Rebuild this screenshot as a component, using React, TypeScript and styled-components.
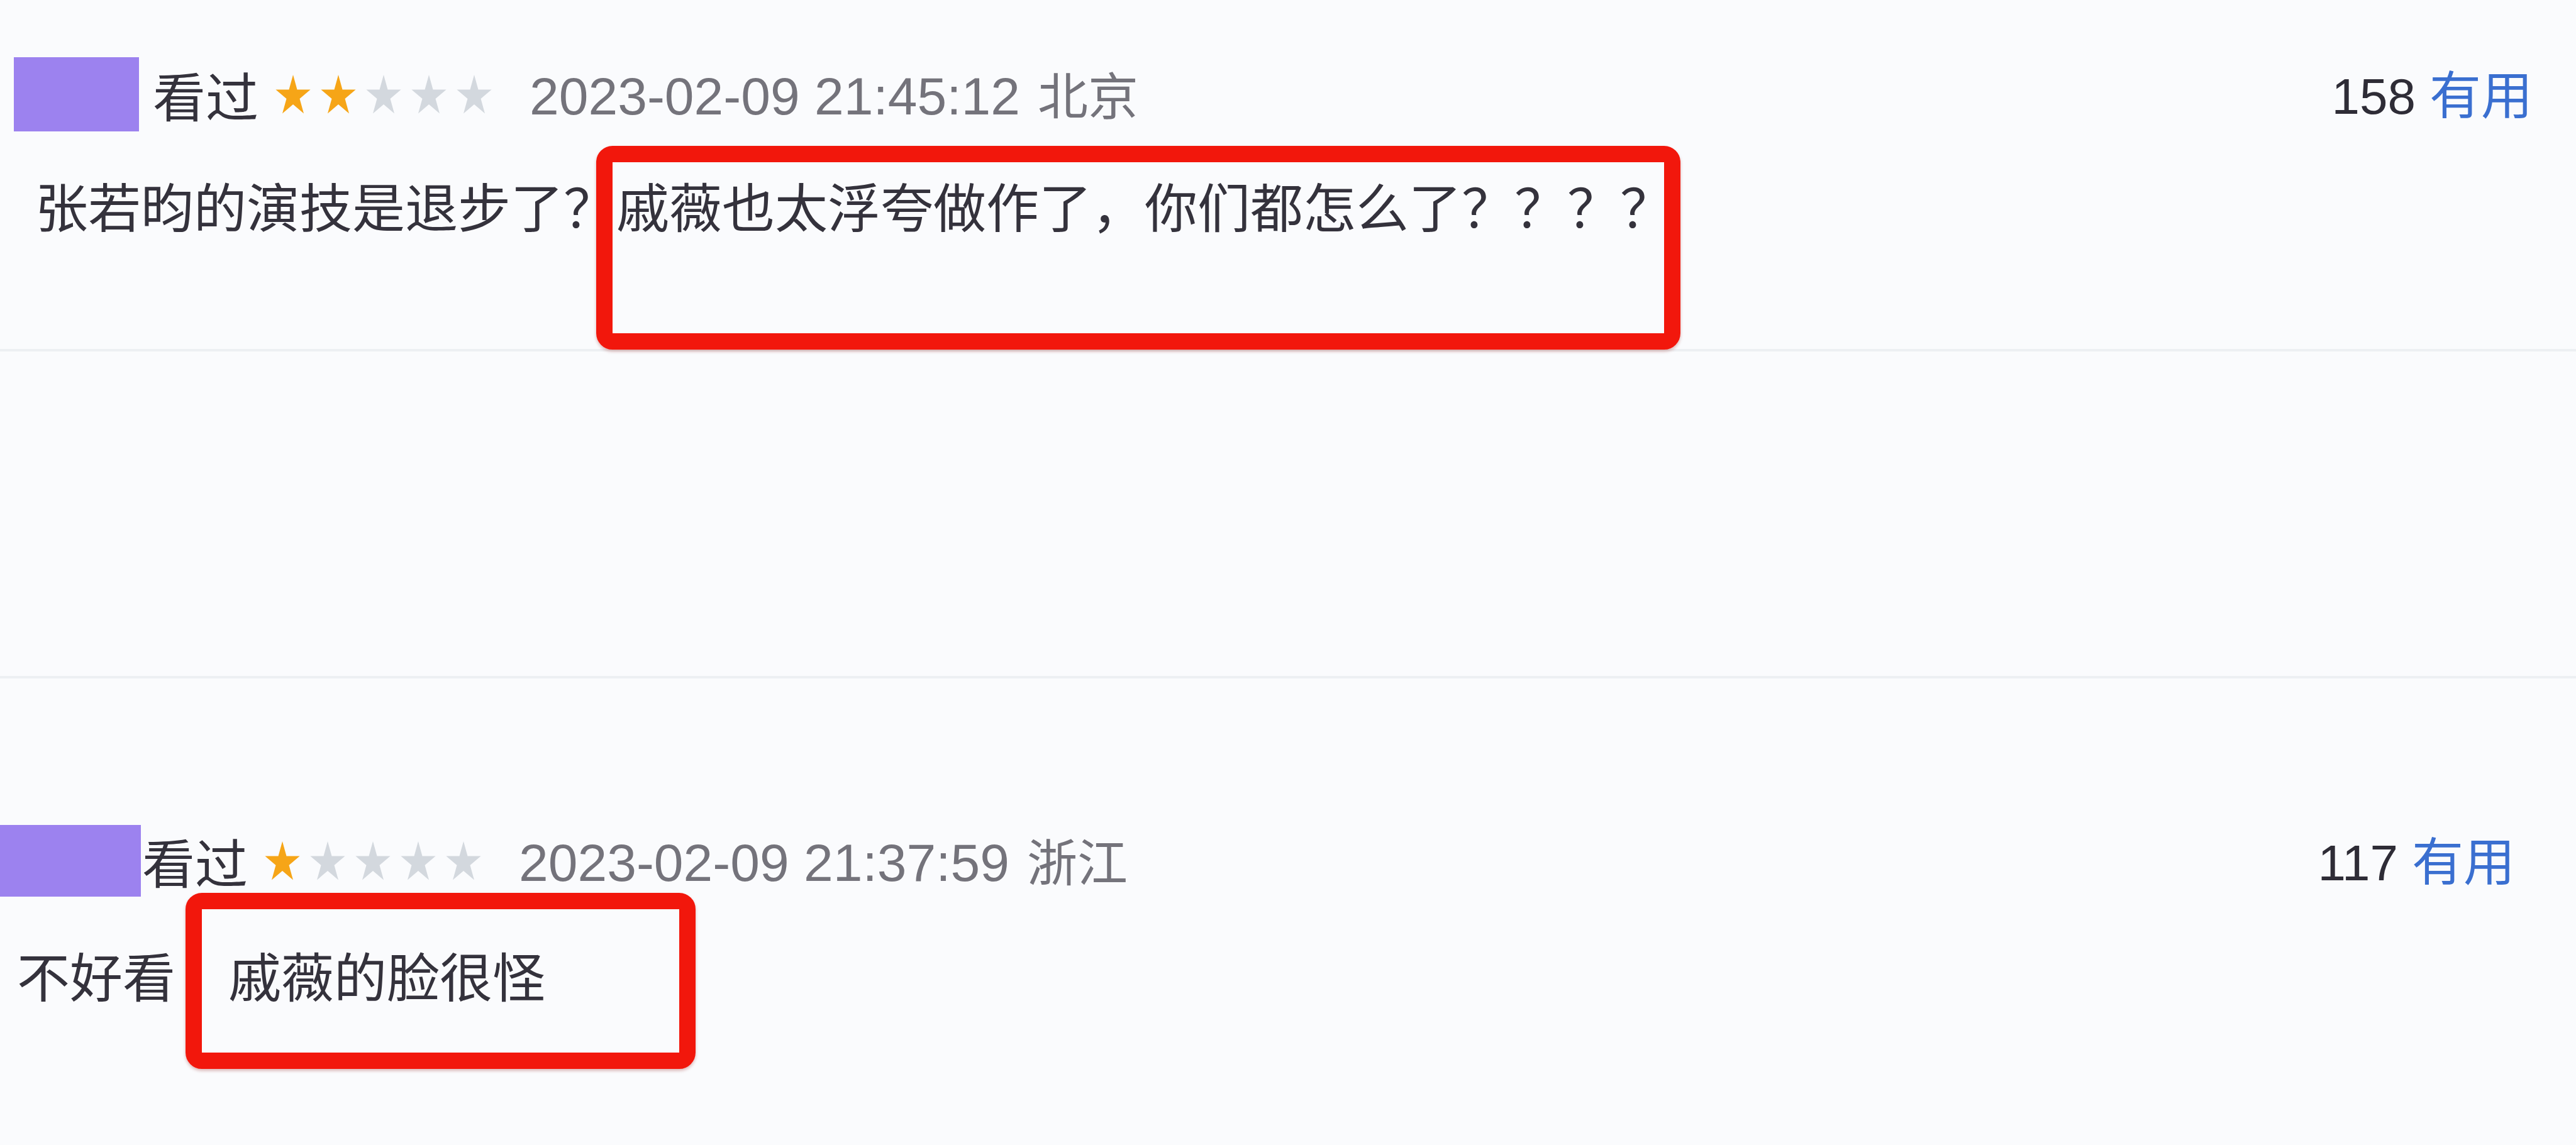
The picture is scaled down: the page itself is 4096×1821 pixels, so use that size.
import React from 'react'
import styled, { createGlobalStyle } from 'styled-components'

const GlobalStyle = createGlobalStyle`
  html, body {
    margin: 0;
    padding: 0;
    background: #fafbfd;
  }
  body {
    width: 4096px;
    height: 1821px;
    overflow: hidden;
    font-family: "Noto Sans CJK SC", "Noto Sans", sans-serif;
    color: #34323c;
  }
`

const Page = styled.div`
  width: 4096px;
  height: 1821px;
  display: flex;
  flex-direction: column;
`

const Comment = styled.section<{ $top: number; $left: number; $right: number; $height: number }>`
  box-sizing: border-box;
  height: ${({ $height }) => $height}px;
  padding: ${({ $top }) => $top}px ${({ $right }) => $right}px 0 ${({ $left }) => $left}px;
  display: flex;
  flex-direction: column;
`

const Divider = styled.div`
  height: 4px;
  background: #edf0f3;
  flex-shrink: 0;
`

const Gap = styled.div<{ $height: number }>`
  height: ${({ $height }) => $height}px;
  flex-shrink: 0;
`

const Header = styled.div<{ $height: number }>`
  display: flex;
  align-items: center;
  height: ${({ $height }) => $height}px;
`

// purple block covering the user's avatar / name
const Avatar = styled.div<{ $w: number; $h: number; $gap: number }>`
  width: ${({ $w }) => $w}px;
  height: ${({ $h }) => $h}px;
  margin-right: ${({ $gap }) => $gap}px;
  background: #9c82ef;
  flex-shrink: 0;
`

const Status = styled.span`
  font-size: 84px;
  line-height: 100px;
  color: #34323c;
`

const Stars = styled.div`
  display: flex;
  gap: 14px;
  margin-left: 26px;
`

const Meta = styled.span`
  margin-left: 59px;
  font-family: "Liberation Sans", "Noto Sans CJK SC", sans-serif;
  font-size: 84px;
  line-height: 100px;
  color: #74737b;
  white-space: nowrap;
`

const Place = styled.span`
  margin-left: 28px;
  font-family: "Noto Sans CJK SC", sans-serif;
  font-size: 80px;
`

const Votes = styled.div`
  margin-left: auto;
  font-family: "Liberation Sans", "Noto Sans CJK SC", sans-serif;
  font-size: 80px;
  line-height: 100px;
  color: #2e2c36;
  white-space: nowrap;
`

const Useful = styled.span`
  margin-left: 22px;
  font-family: "Noto Sans CJK SC", sans-serif;
  font-size: 82px;
  color: #3a6fd0;
`

const Body = styled.p<{ $gap: number; $indent: number }>`
  margin: ${({ $gap }) => $gap}px 0 0 ${({ $indent }) => $indent}px;
  font-size: 84px;
  line-height: 100px;
  white-space: pre;
  color: #34323c;
`

// red annotation frame drawn over part of the comment
const Highlight = styled.span<{ $t: number; $r: number; $b: number; $l: number }>`
  position: relative;
  display: inline-block;

  &::after {
    content: '';
    position: absolute;
    top: ${({ $t }) => $t}px;
    right: ${({ $r }) => $r}px;
    bottom: ${({ $b }) => $b}px;
    left: ${({ $l }) => $l}px;
    border: 26px solid #f2170c;
    border-radius: 26px;
    box-shadow: 0 3px 5px rgba(140, 10, 0, 0.28);
    pointer-events: none;
  }
`

function Star({ on }: { on: boolean }) {
  return (
    <svg width="58" height="62" viewBox="0 0 58 62">
      <polygon
        points="29,0 35.5,23.5 56.6,23.5 39.5,38 46,61.5 29,47 12,61.5 18.5,38 1.4,23.5 22.5,23.5"
        fill={on ? '#f6a517' : '#d3d8de'}
      />
    </svg>
  )
}

function Rating({ value }: { value: number }) {
  return (
    <Stars>
      {[0, 1, 2, 3, 4].map((i) => (
        <Star key={i} on={i < value} />
      ))}
    </Stars>
  )
}

export default function App() {
  return (
    <>
      <GlobalStyle />
      <Page>
        <Comment $top={90} $left={22} $right={69} $height={555}>
          <Header $height={120}>
            <Avatar $w={199} $h={118} $gap={22} />
            <Status>看过</Status>
            <Rating value={2} />
            <Meta>
              2023-02-09 21:45:12<Place>北京</Place>
            </Meta>
            <Votes>
              158<Useful>有用</Useful>
            </Votes>
          </Header>
          <Body $gap={66} $indent={34}>
            {'张若昀的演技是退步了？'}
            <Highlight $t={-44} $r={-12} $b={-180} $l={-32}>
              戚薇也太浮夸做作了，你们都怎么了？？？？
            </Highlight>
          </Body>
        </Comment>
        <Divider />
        <Gap $height={516} />
        <Divider />
        <Comment $top={231} $left={0} $right={97} $height={742}>
          <Header $height={118}>
            <Avatar $w={224} $h={114} $gap={2} />
            <Status>看过</Status>
            <Rating value={1} />
            <Meta>
              2023-02-09 21:37:59<Place>浙江</Place>
            </Meta>
            <Votes>
              117<Useful>有用</Useful>
            </Votes>
          </Header>
          <Body $gap={72} $indent={27}>
            {'不好看\u3000'}
            <Highlight $t={-80} $r={-239} $b={-100} $l={-68}>
              戚薇的脸很怪
            </Highlight>
          </Body>
        </Comment>
      </Page>
    </>
  )
}
